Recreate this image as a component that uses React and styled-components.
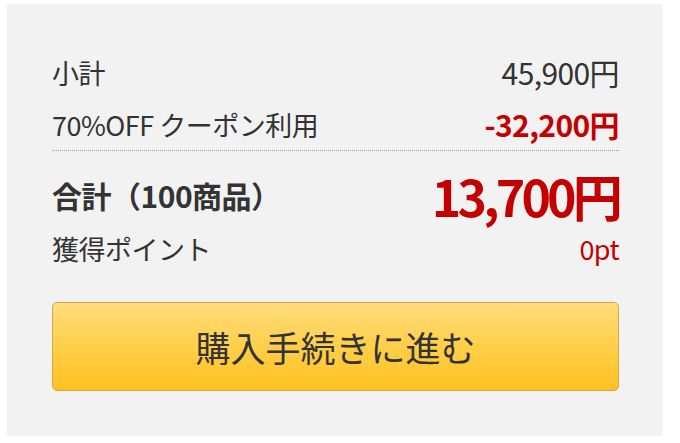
import React from 'react'
import styled, { createGlobalStyle } from 'styled-components'

const Global = createGlobalStyle`
  body {
    margin: 0;
    background: #ffffff;
    font-family: "Noto Sans CJK JP", "Noto Sans", sans-serif;
  }
`

const Page = styled.div`
  padding: 4px 17px 7px 7px;
`

const Panel = styled.div`
  background: #f2f2f2;
  width: 656px;
  height: 432px;
  box-sizing: border-box;
  padding: 42px 44px 0 45px;
  display: flex;
  flex-direction: column;
`

const Row = styled.div`
  display: flex;
  justify-content: space-between;
  align-items: center;
  height: ${p => p.h}px;
  margin-top: ${p => p.mt || 0}px;
  color: #333333;
  white-space: nowrap;
`

const Label = styled.span`
  font-size: ${p => p.size || 27}px;
  font-weight: ${p => (p.bold ? 700 : 400)};
  letter-spacing: -0.5px;
`

const Value = styled.span`
  font-size: ${p => p.size || 30}px;
  font-weight: ${p => (p.bold ? 700 : 400)};
  color: ${p => p.color || '#333333'};
  letter-spacing: ${p => (p.big ? '-3.8px' : '-0.6px')};
`

const Divider = styled.div`
  border-top: 1px dotted #9a9a9a;
  margin-bottom: 1px;
  height: 0;
`

const Button = styled.button`
  margin-top: 38px;
  height: 89px;
  border: 1px solid #d3a650;
  border-radius: 5px;
  background: linear-gradient(180deg, #ffdc7c 0%, #ffcf4a 50%, #ffc11f 100%);
  color: #333333;
  font-family: inherit;
  font-size: 35px;
  padding: 0;
  cursor: pointer;
`

export default function App() {
  return (
    <Page>
      <Global />
      <Panel>
        <Row h={52}>
          <Label>小計</Label>
          <Value>45,900円</Value>
        </Row>
        <Row h={52}>
          <Label>70%OFF クーポン利用</Label>
          <Value bold color="#c40000">-32,200円</Value>
        </Row>
        <Divider />
        <Row h={74} mt={6}>
          <Label size={30} bold>合計（100商品）</Label>
          <Value size={50} bold big color="#c40000">13,700円</Value>
        </Row>
        <Row h={32}>
          <Label>獲得ポイント</Label>
          <Value size={27} color="#c40000">0pt</Value>
        </Row>
        <Button>購入手続きに進む</Button>
      </Panel>
    </Page>
  )
}
